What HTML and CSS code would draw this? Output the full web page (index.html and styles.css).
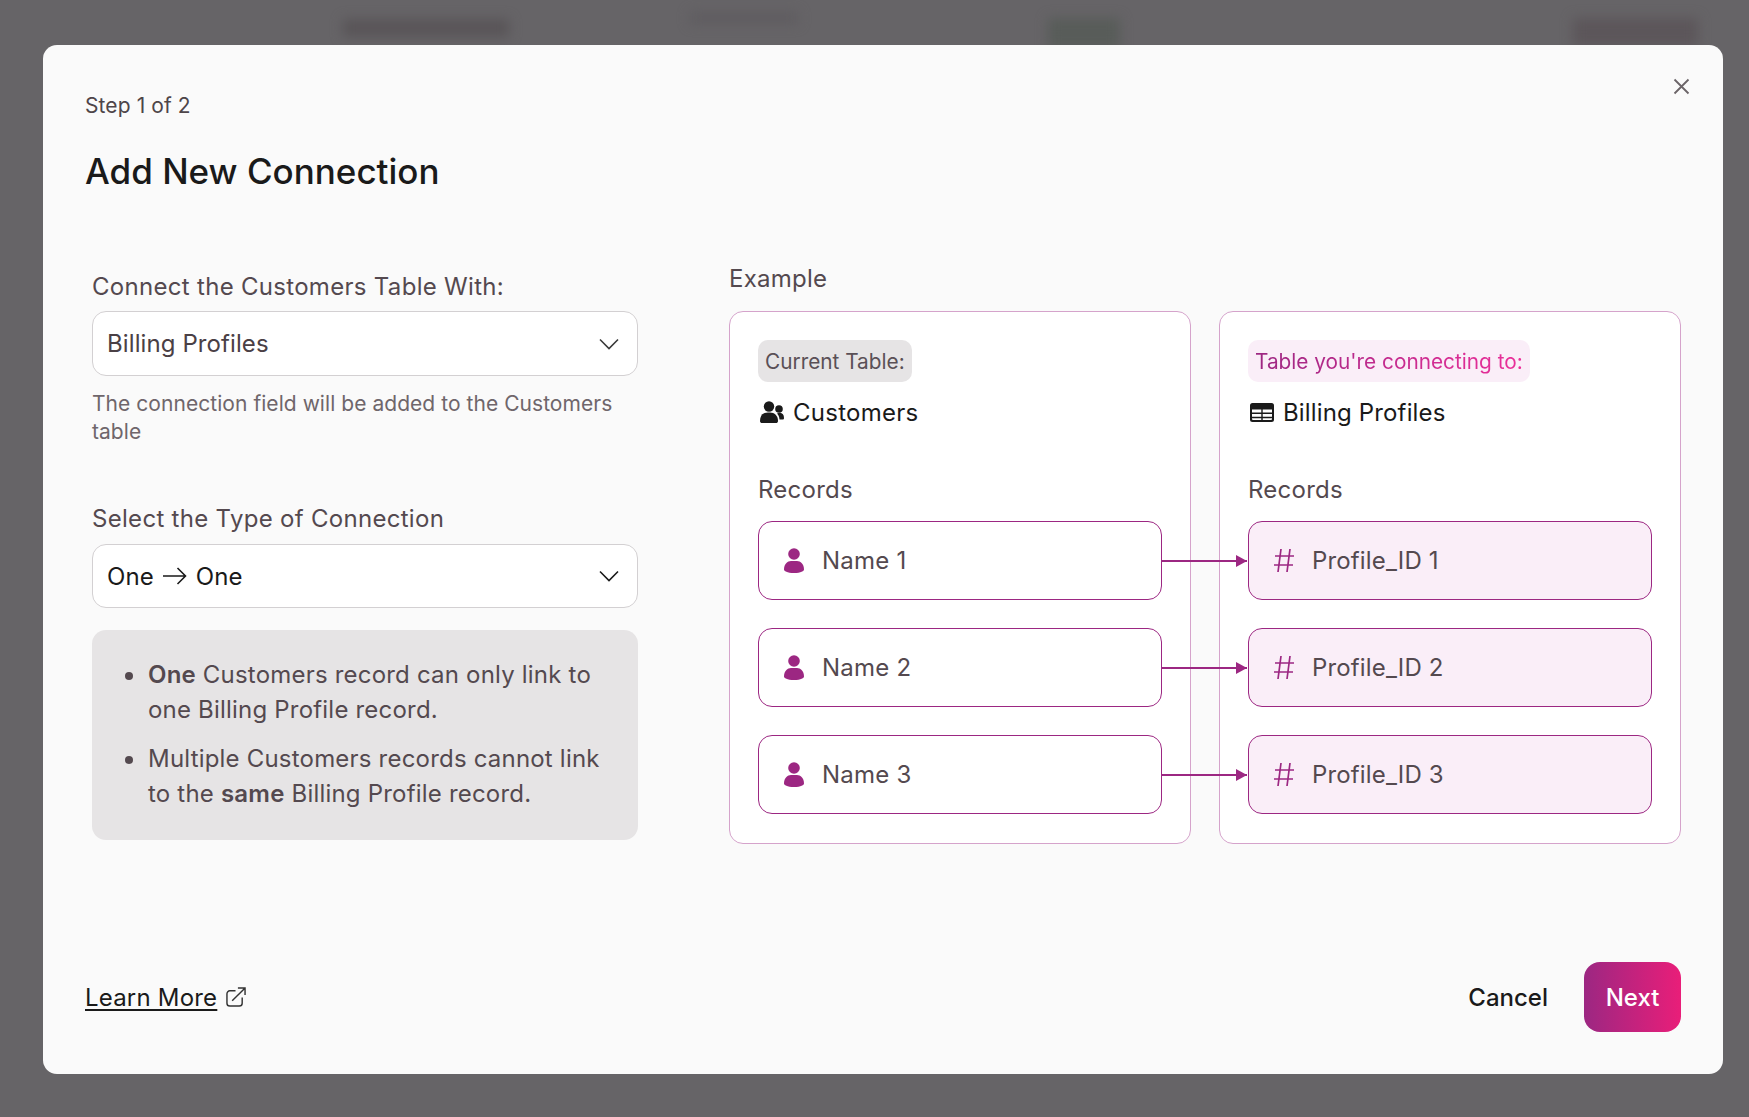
FILE: index.html
```html
<!DOCTYPE html>
<html lang="en">
<head>
<meta charset="utf-8">
<title>Add New Connection</title>
<link rel="stylesheet" href="styles.css">
</head>
<body>
<div class="page-behind">
  <div class="blob blob-a"></div>
  <div class="blob blob-b"></div>
  <div class="blob blob-c"></div>
  <div class="blob blob-d"></div>
</div>
<div class="modal">
  <button class="close" aria-label="Close">
    <svg width="17" height="17" viewBox="0 0 17 17"><path d="M1.5 1.5l14 14M15.5 1.5l-14 14" fill="none" stroke="#6b6468" stroke-width="1.8"/></svg>
  </button>
  <header class="head">
    <div class="step">Step 1 of 2</div>
    <h1 class="title">Add New Connection</h1>
  </header>
  <div class="body">
    <section class="form">
      <label class="label">Connect the Customers Table With:</label>
      <div class="select">
        <span>Billing Profiles</span>
        <svg class="chev" width="20" height="12" viewBox="0 0 20 12"><path d="M1 1.5l9 9 9-9" fill="none" stroke="#3a3a3a" stroke-width="1.6"/></svg>
      </div>
      <p class="help">The connection field will be added to the Customers table</p>
      <label class="label label-second">Select the Type of Connection</label>
      <div class="select select-dark">
        <span class="one-one">One
          <svg width="24" height="20" viewBox="0 0 24 20"><path d="M0 10h22.5M14.5 2l8 8-8 8" fill="none" stroke="#1a1a1a" stroke-width="1.6"/></svg>
          One</span>
        <svg class="chev" width="20" height="12" viewBox="0 0 20 12"><path d="M1 1.5l9 9 9-9" fill="none" stroke="#1a1a1a" stroke-width="1.6"/></svg>
      </div>
      <div class="info">
        <ul>
          <li><b>One</b> Customers record can only link to one Billing Profile record.</li>
          <li>Multiple Customers records cannot link to the <b>same</b> Billing Profile record.</li>
        </ul>
      </div>
    </section>
    <section class="example">
      <div class="example-label">Example</div>
      <div class="panels">
        <div class="panel">
          <div class="chip">Current Table:</div>
          <div class="table-name">
            <svg width="24" height="22" viewBox="0 0 24 22"><circle cx="9" cy="5.5" r="5.2" fill="#1a1a1a"/><circle cx="19" cy="8" r="3.8" fill="#1a1a1a"/><path d="M0 20c0-6 3.5-8.5 8-8.5h2c4.5 0 8 3 8 8.5 0 1.5-1 2-2 2H2c-1 0-2-.5-2-2z" fill="#1a1a1a"/><path d="M17 12.600c1-.6 2-.8 3-.8 2.500 0 4 2.200 4 5.200 0 1-.5 1.500-1.500 1.500h-3c-.2-2.500-1-4.500-2.500-5.900z" fill="#1a1a1a"/></svg>
            <span>Customers</span>
          </div>
          <div class="records-label">Records</div>
          <div class="records">
            <div class="record">
              <svg class="person" width="20" height="25" viewBox="0 0 20 25"><circle cx="10" cy="6" r="5.800" fill="#9c2782"/><path d="M0 21.500C0 16 3.500 13 7 13h6c3.500 0 7 3 7 8.500 0 1.500-3 3.500-10 3.500S0 23 0 21.500z" fill="#9c2782"/></svg>
              <span>Name 1</span>
              <span class="arrow"></span>
            </div>
            <div class="record">
              <svg class="person" width="20" height="25" viewBox="0 0 20 25"><circle cx="10" cy="6" r="5.800" fill="#9c2782"/><path d="M0 21.500C0 16 3.500 13 7 13h6c3.500 0 7 3 7 8.500 0 1.500-3 3.500-10 3.500S0 23 0 21.500z" fill="#9c2782"/></svg>
              <span>Name 2</span>
              <span class="arrow"></span>
            </div>
            <div class="record">
              <svg class="person" width="20" height="25" viewBox="0 0 20 25"><circle cx="10" cy="6" r="5.800" fill="#9c2782"/><path d="M0 21.500C0 16 3.500 13 7 13h6c3.500 0 7 3 7 8.500 0 1.500-3 3.500-10 3.500S0 23 0 21.500z" fill="#9c2782"/></svg>
              <span>Name 3</span>
              <span class="arrow"></span>
            </div>
          </div>
        </div>
        <div class="panel">
          <div class="chip chip-pink"><span>Table you're connecting to:</span></div>
          <div class="table-name">
            <svg width="24" height="19" viewBox="0 0 24 19"><rect width="24" height="19" rx="2.500" fill="#1a1a1a"/><path d="M2 6.500h9.300v3H2zM12.700 6.500H22v3h-9.300zM2 11h9.300v2.800H2zM12.700 11H22v2.800h-9.300zM2 15.200h9.300V17H3a1 1 0 0 1-1-1zM12.700 15.200H22V16a1 1 0 0 1-1 1h-8.300z" fill="#fff"/></svg>
            <span class="tight">Billing Profiles</span>
          </div>
          <div class="records-label">Records</div>
          <div class="records">
            <div class="record record-pink">
              <svg class="hash" width="22" height="25" viewBox="0 0 22 25"><path d="M8 1L5 24M17 1l-3 23M2 8h19M1 17h19" fill="none" stroke="#9c2782" stroke-width="1.700"/></svg>
              <span>Profile_ID 1</span>
            </div>
            <div class="record record-pink">
              <svg class="hash" width="22" height="25" viewBox="0 0 22 25"><path d="M8 1L5 24M17 1l-3 23M2 8h19M1 17h19" fill="none" stroke="#9c2782" stroke-width="1.700"/></svg>
              <span>Profile_ID 2</span>
            </div>
            <div class="record record-pink">
              <svg class="hash" width="22" height="25" viewBox="0 0 22 25"><path d="M8 1L5 24M17 1l-3 23M2 8h19M1 17h19" fill="none" stroke="#9c2782" stroke-width="1.700"/></svg>
              <span>Profile_ID 3</span>
            </div>
          </div>
        </div>
      </div>
    </section>
  </div>
  <footer class="foot">
    <a class="learn" href="#"><span>Learn More</span>
      <svg width="20" height="20" viewBox="0 0 21 21"><path d="M10 4H4a3 3 0 0 0-3 3v10a3 3 0 0 0 3 3h10a3 3 0 0 0 3-3v-6" fill="none" stroke="#333" stroke-width="1.500"/><path d="M6.500 14.500L19.500 1.500M12.500 1h7.500v7.500" fill="none" stroke="#333" stroke-width="1.500"/></svg>
    </a>
    <div class="actions">
      <button class="cancel">Cancel</button>
      <button class="next">Next</button>
    </div>
  </footer>
</div>
</body>
</html>
```
FILE: styles.css
```css
* { box-sizing: border-box; }
html, body { margin: 0; height: 100%; }
body {
  background: #666467;
  font-family: Inter, "Liberation Sans", sans-serif;
  color: #1a1a1a;
  letter-spacing: .25px;
  overflow: hidden;
  position: relative;
}
.page-behind { display: flex; align-items: flex-start; height: 45px; overflow: hidden; }
.blob { filter: blur(6px); }
.blob-a { width: 166px; height: 18px; margin: 19px 0 0 343px; background: #595558; }
.blob-b { width: 108px; height: 12px; margin: 12px 0 0 181px; background: #5f5c60; }
.blob-c { width: 72px; height: 30px; margin: 18px 0 0 250px; background: #585c59; }
.blob-d { width: 125px; height: 28px; margin: 18px 0 0 453px; background: #5c565a; }

.modal {
  position: absolute;
  left: 43px; top: 45px;
  width: 1680px; height: 1029px;
  background: #fafafa;
  border-radius: 14px;
  padding: 47px 42px 42px;
  display: flex;
  flex-direction: column;
}
.close {
  position: absolute;
  top: 33px; right: 33px;
  width: 17px; height: 17px;
  padding: 0; border: 0; background: none;
  line-height: 0;
}
.head { height: 171px; }
.step { font-size: 21px; letter-spacing: .1px; line-height: 28px; color: #4e4549; }
.title { margin: 29px 0 0; font-size: 35px; letter-spacing: 0; line-height: 44px; font-weight: 500; color: #1a1a1a; }

.body { display: flex; flex: 1; gap: 91px; }
.form { width: 546px; margin-left: 7px; padding-top: 8px; flex: none; }
.example { flex: 1; }
.label { display: block; font-size: 24px; letter-spacing: .3px; line-height: 32px; color: #54494f; margin-bottom: 8px; }
.label-second { margin-top: 57px; margin-bottom: 9px; }
.select {
  height: 65px;
  background: #fff;
  border: 1.500px solid #d3d0d2;
  border-radius: 14px;
  padding: 0 18px 0 14px;
  display: flex;
  align-items: center;
  justify-content: space-between;
  font-size: 24px;
  letter-spacing: .1px;
  color: #4a4045;
}
.select-dark { height: 64px; color: #1a1a1a; }
.chev { flex: none; }
.one-one { display: flex; align-items: center; gap: 9px; }
.help { margin: 14px 0 0; font-size: 21px; letter-spacing: .05px; line-height: 28px; color: #6f666b; }
.info {
  margin-top: 22px;
  height: 210px;
  background: #e6e4e5;
  border-radius: 14px;
  padding: 28px 30px 0 0;
  font-size: 24px;
  letter-spacing: .2px;
  line-height: 34.600px;
  color: #54494f;
}
.info ul { margin: 0; padding: 0 0 0 56px; list-style: none; }
.info li { position: relative; }
.info li::before {
  content: "";
  position: absolute;
  left: -23px; top: 14px;
  width: 8px; height: 8px;
  border-radius: 50%;
  background: #54494f;
}
.info li + li { margin-top: 15px; }
.info b { font-weight: 600; }

.example-label { font-size: 24px; line-height: 32px; color: #54494f; margin-bottom: 16px; }
.panels { display: flex; gap: 28px; }
.panel {
  width: 462px; height: 533px;
  background: #fff;
  border: 1px solid #d5a3cb;
  border-radius: 14px;
  padding: 28px;
}
.chip {
  display: inline-flex;
  align-items: center;
  height: 42px;
  padding: 0 7px;
  border-radius: 10px;
  background: #e6e4e5;
  font-size: 20.800px;
  letter-spacing: 0;
  color: #5a5056;
}
.chip-pink { background: #faeef8; }
.chip-pink span {
  background: linear-gradient(90deg, #9c2782, #ec2f9a);
  -webkit-background-clip: text;
  background-clip: text;
  color: transparent;
}
.table-name {
  display: flex;
  align-items: center;
  gap: 9px;
  height: 32px;
  margin-top: 14px;
  padding-left: 2px;
  font-size: 24px;
  color: #1a1a1a;
}
.tight { letter-spacing: .15px; }
.records-label { margin-top: 46px; font-size: 24px; line-height: 32px; color: #54494f; }
.records { margin-top: 15px; display: flex; flex-direction: column; gap: 28px; }
.record {
  position: relative;
  height: 79px;
  border: 1.500px solid #9c2782;
  border-radius: 14px;
  background: #fff;
  display: flex;
  align-items: center;
  padding-left: 25px;
  gap: 18px;
  font-size: 24px;
  color: #54494f;
}
.record-pink { background: #faeef8; padding-left: 24px; gap: 17px; letter-spacing: .15px; }
.person, .hash { flex: none; }
.arrow {
  position: absolute;
  left: 100%;
  top: 50%;
  width: 86px;
  height: 2px;
  margin-top: -1px;
  background: #9c2782;
}
.arrow::after {
  content: "";
  position: absolute;
  right: 0; top: -5px;
  border-left: 11px solid #9c2782;
  border-top: 6px solid transparent;
  border-bottom: 6px solid transparent;
}

.foot { display: flex; align-items: center; justify-content: space-between; height: 70px; }
.learn { display: flex; align-items: center; gap: 9px; font-size: 24px; letter-spacing: .2px; color: #1a1a1a; text-decoration: none; }
.learn span { text-decoration: underline; text-underline-offset: 3px; }
.actions { display: flex; align-items: center; gap: 36px; }
.cancel, .next { font-family: inherit; font-size: 24px; font-weight: 500; border: 0; padding: 0; letter-spacing: 0; }
.cancel { background: none; color: #1a1a1a; }
.next {
  width: 97px; height: 70px;
  border-radius: 16px;
  color: #fff;
  background: linear-gradient(90deg, #9c2782, #e91e79);
}
```
